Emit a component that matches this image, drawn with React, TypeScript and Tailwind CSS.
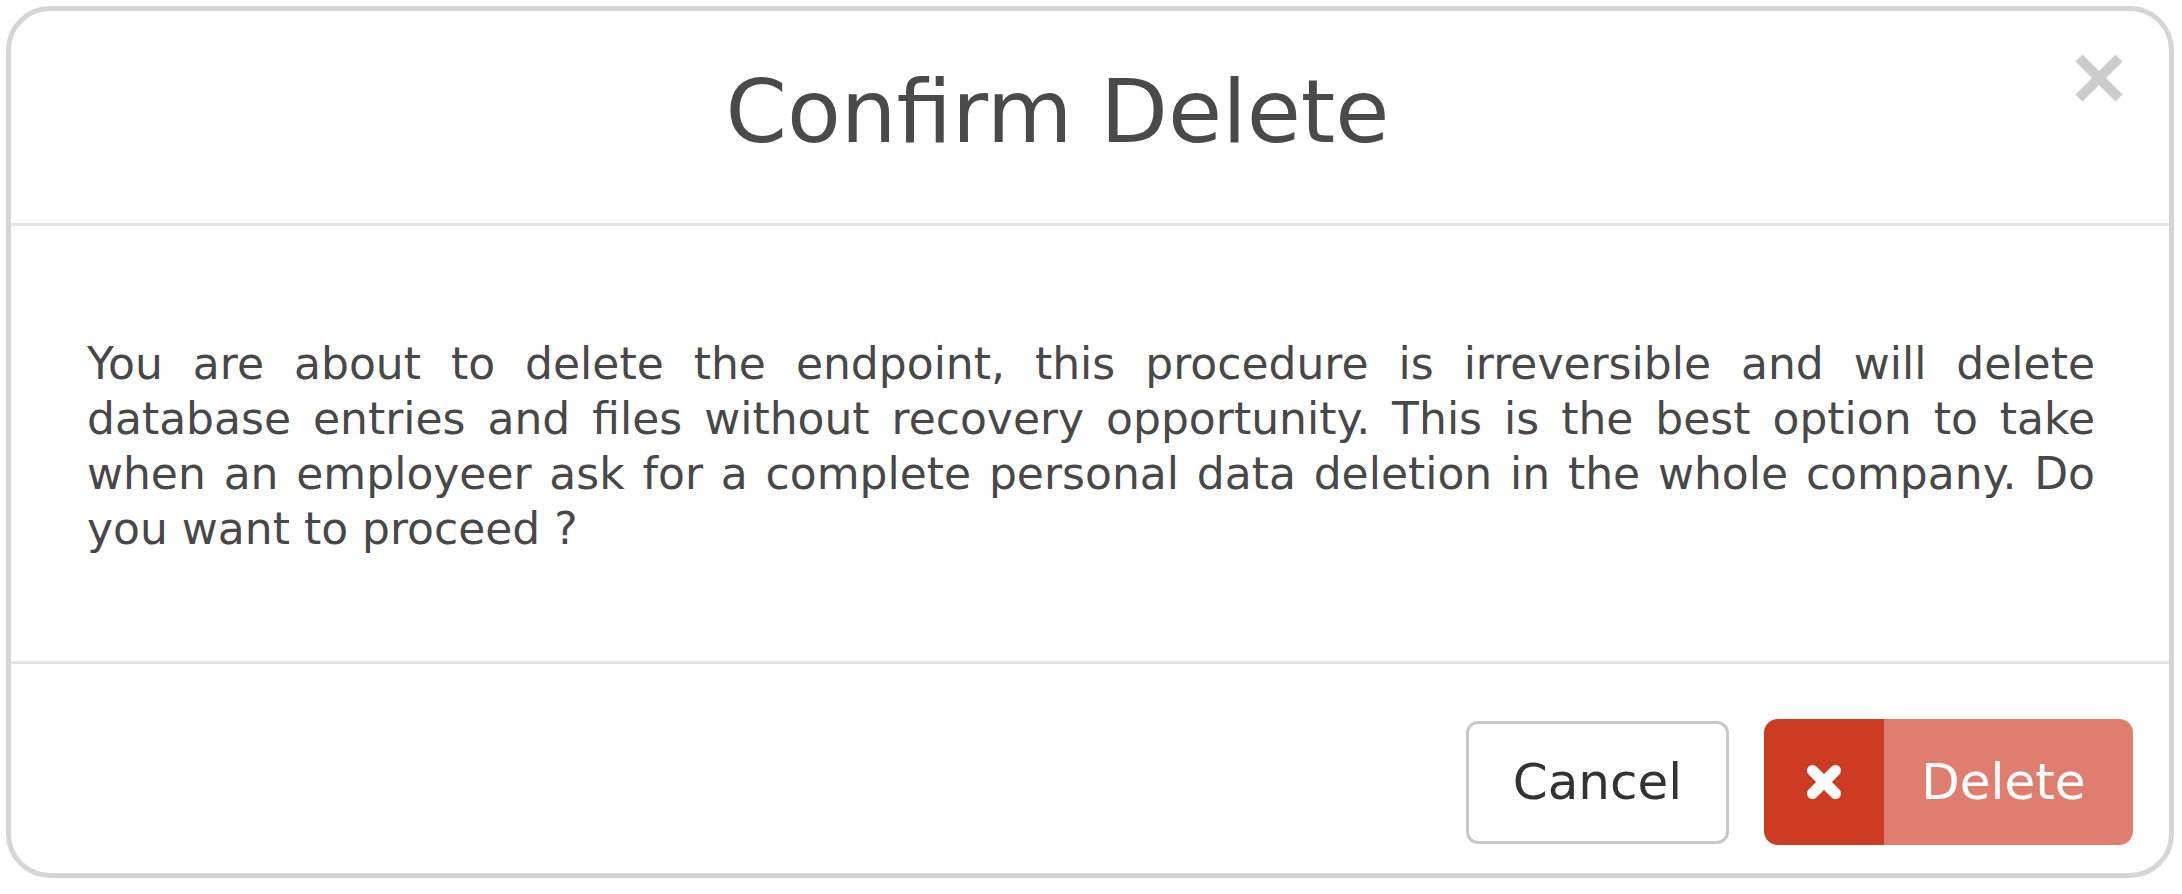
import React from "react";

function CloseIcon() {
  return (
    <svg width="48" height="48" viewBox="0 0 48 48" aria-hidden="true">
      <line x1="4" y1="4" x2="44" y2="44" stroke="#cccccc" strokeWidth="10" strokeLinecap="butt" />
      <line x1="44" y1="4" x2="4" y2="44" stroke="#cccccc" strokeWidth="10" strokeLinecap="butt" />
    </svg>
  );
}

function TimesIcon() {
  return (
    <svg width="36" height="36" viewBox="0 0 36 36" aria-hidden="true">
      <line x1="6.5" y1="6.5" x2="29.5" y2="29.5" stroke="#ffffff" strokeWidth="11" strokeLinecap="round" />
      <line x1="29.5" y1="6.5" x2="6.5" y2="29.5" stroke="#ffffff" strokeWidth="11" strokeLinecap="round" />
    </svg>
  );
}

export default function App() {
  return (
    <div
      className="w-[2182px] h-[894px] bg-white p-[6px]"
      style={{ fontFamily: '"DejaVu Sans", Verdana, sans-serif' }}
    >
      <div className="w-[2168px] h-[872px] border-[5px] border-[#d5d5d5] rounded-[44px] bg-white flex flex-col overflow-hidden">
        {/* Header */}
        <div className="h-[215px] border-b-[3px] border-[#e5e5e5] flex items-start pl-[75px] pr-[46px] gap-[46px]">
          <h1 className="flex-1 text-center text-[88px] leading-none text-[#4a4a4a] pt-[57px]">
            Confirm Delete
          </h1>
          <button className="mt-[43px] w-[48px] h-[48px] flex items-center justify-center">
            <CloseIcon />
          </button>
        </div>

        {/* Body */}
        <div className="h-[438px] border-b-[3px] border-[#e5e5e5] pl-[76px] pr-[74px] pt-[110px]">
          <p className="text-[44px] leading-[55px] text-[#484848] text-justify">
            You are about to delete the endpoint, this procedure is irreversible and will delete
            database entries and files without recovery opportunity. This is the best option to
            take when an employeer ask for a complete personal data deletion in the whole company.
            Do you want to proceed ?
          </p>
        </div>

        {/* Footer */}
        <div className="flex-1 flex items-start justify-end gap-[35px] pr-[36px] pt-[55px]">
          <button className="mt-[2px] w-[263px] h-[123px] border-[3px] border-[#c8c8c8] rounded-[12px] bg-white text-[50px] text-[#333333] flex items-center justify-center">
            Cancel
          </button>
          <button className="w-[369px] h-[126px] rounded-[14px] overflow-hidden flex">
            <span className="w-[120px] h-full bg-[#cc3b22] flex items-center justify-center">
              <TimesIcon />
            </span>
            <span className="flex-1 h-full bg-[#df7d6f] text-white text-[50px] flex items-center justify-center pr-[10px]">
              Delete
            </span>
          </button>
        </div>
      </div>
    </div>
  );
}
